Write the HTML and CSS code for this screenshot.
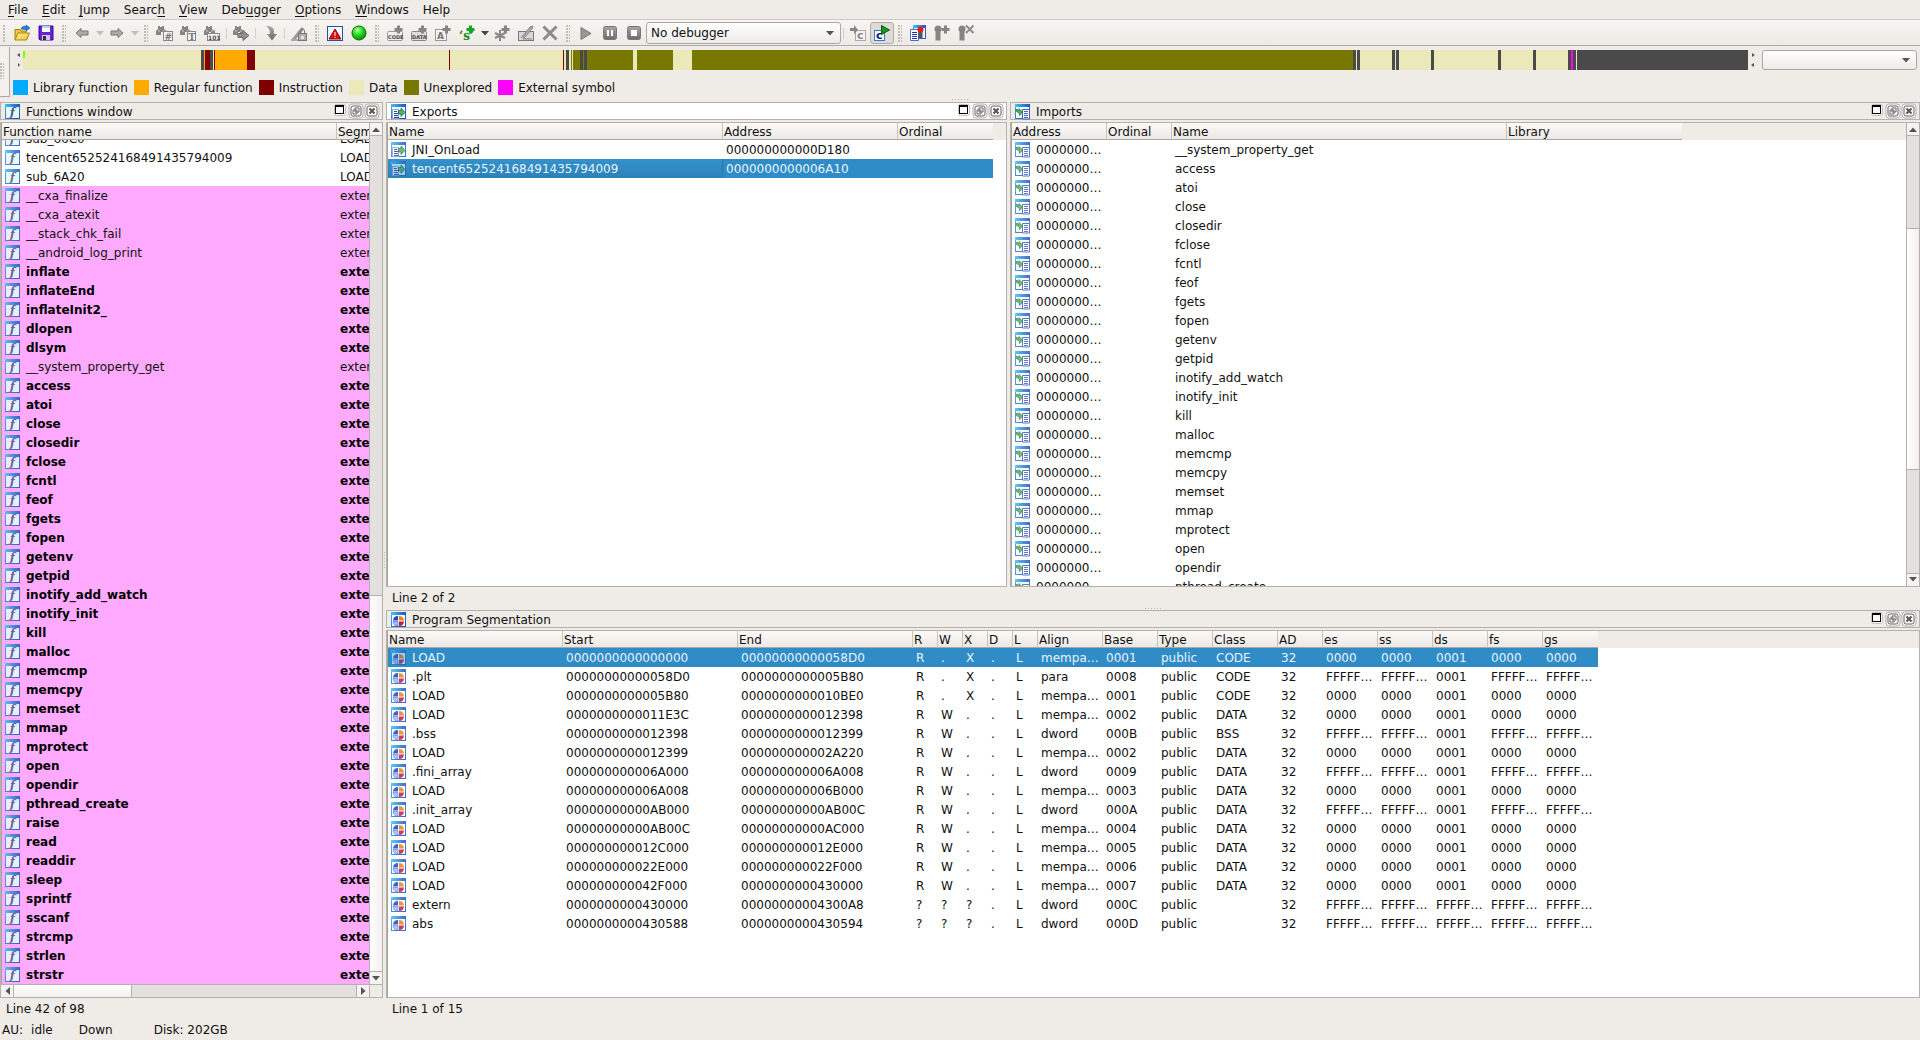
FILE: index.html
```html
<!DOCTYPE html>
<html lang="en">
<head>
<meta charset="utf-8">
<title>IDA</title>
<link rel="stylesheet" href="styles.css">
</head>
<body>
<svg class="sprite" aria-hidden="true">
  <defs>
    <linearGradient id="g-title" x1="0" x2="1"><stop offset="0" stop-color="#3fc4f5"/><stop offset="1" stop-color="#2150c0"/></linearGradient>
    <linearGradient id="g-frame" x1="0" y1="0" x2="1" y2="1"><stop offset="0" stop-color="#4fa0ec"/><stop offset="1" stop-color="#1d4fae"/></linearGradient>
    <linearGradient id="g-grey" x1="0" y1="0" x2="0" y2="1"><stop offset="0" stop-color="#a8a8a8"/><stop offset="1" stop-color="#6c6c6c"/></linearGradient>
    <radialGradient id="g-green" cx="0.4" cy="0.3" r="0.7"><stop offset="0" stop-color="#b6ffb0"/><stop offset="0.5" stop-color="#22dd1c"/><stop offset="1" stop-color="#0a8a0a"/></radialGradient>
    <linearGradient id="g-folder" x1="0" y1="0" x2="1" y2="1"><stop offset="0" stop-color="#fff6b0"/><stop offset="1" stop-color="#f2bd20"/></linearGradient>
  </defs>
  <symbol id="i-window" viewBox="0 0 16 16">
    <rect x="0.5" y="0.5" width="14" height="14" fill="#f6fdff" stroke="url(#g-frame)"/>
    <rect x="0" y="0" width="15" height="3" fill="url(#g-title)"/>
  </symbol>
  <symbol id="i-func" viewBox="0 0 16 16">
    <use href="#i-window"/>
    <rect x="1" y="3" width="13" height="11" fill="#e4f8fb"/>
    <text x="5" y="12" class="glyph-f">f</text>
  </symbol>
  <symbol id="i-export" viewBox="0 0 16 16">
    <use href="#i-window"/>
    <path d="M1.500 5.500h6v9h-6z" fill="#fff" stroke="#8fa4e4"/><path d="M3 7.500h3M3 9.500h4M3 11.500h4M3 13.500h5" stroke="#2a40b8"/>
    <path d="M7.500 6.500h2.500v-2.500l4 4.500l-4 4v-2.500h-2.500z" fill="#4cb85c" stroke="#1b5428" stroke-width="0.700"/>
  </symbol>
  <symbol id="i-import" viewBox="0 0 16 16">
    <use href="#i-window"/>
    <path d="M7.500 5.500h7v9.500h-7z" fill="#fff" stroke="#3a62b8"/><path d="M9 7.500h4M9 9.500h4M9 11.500h4M9 13.500h4" stroke="#4860c8"/>
    <path d="M1 5.500h1.500l1.500 1v-2l3.500 3.500l-3 3.500v-2l-3.500-2.500z" fill="#4cb85c" stroke="#1b5428" stroke-width="0.600"/>
  </symbol>
  <symbol id="i-seg" viewBox="0 0 16 16">
    <use href="#i-window"/>
    <path d="M7 4v4.500h-5a5 5 0 0 1 5-4.500z" fill="#1f45c8"/><path d="M8 4v4.500h5a5 5 0 0 0-5-4.500z" fill="#f08010"/>
    <path d="M2 9.500h5v4.500a5 5 0 0 1-5-4.500z" fill="#9cc0f8" stroke="#3868d8" stroke-width="0.600"/><path d="M8 9.500h5a5 5 0 0 1-5 4.500z" fill="#c4184c"/>
  </symbol>
  <symbol id="i-max" viewBox="0 0 12 12"><rect x="0.500" y="0.500" width="11" height="11" rx="2" fill="#fff" stroke="#c3c0bc"/><rect x="1.500" y="1.500" width="8" height="8" fill="#fff" stroke="#000"/><path d="M1 2h9" stroke="#000" stroke-width="2"/></symbol>
  <symbol id="i-float" viewBox="0 0 16 16"><rect x="1" y="1" width="14" height="14" rx="3" fill="#fbfaf9" stroke="#b4b1ae"/><rect x="3" y="3" width="10" height="10" rx="2" fill="none" stroke="#666"/><path d="M7 5h4v4h-4zM5 7h4v4h-4z" fill="#fff" stroke="#666"/></symbol>
  <symbol id="i-close" viewBox="0 0 16 16"><rect x="1" y="1" width="14" height="14" rx="3" fill="#fbfaf9" stroke="#b4b1ae"/><rect x="3" y="3" width="10" height="10" rx="2" fill="none" stroke="#666"/><path d="M5.500 5.500l5 5M10.500 5.500l-5 5" stroke="#555" stroke-width="2"/></symbol>
  <symbol id="i-up" viewBox="0 0 8 5"><path d="M0 5l4-4.500l4 4.500z" fill="#555"/></symbol>
  <symbol id="i-down" viewBox="0 0 8 5"><path d="M0 0h8l-4 4.500z" fill="currentColor"/></symbol>
  <symbol id="i-left" viewBox="0 0 5 8"><path d="M5 0v8l-4.500-4z" fill="#555"/></symbol>
  <symbol id="i-right" viewBox="0 0 5 8"><path d="M0 0v8l4.500-4z" fill="#555"/></symbol>
  <symbol id="i-bino" viewBox="0 0 16 16"><path d="M2 1h2v1h2v-1h2v3l3 2v4h-4v-3h-2v3h-5v-4l2-2z" fill="#858585"/><path d="M2 6h2M7 6h2" stroke="#c8c8c8"/></symbol>
  <symbol id="i-plus" viewBox="0 0 9 9"><path d="M3 0.500h3v2.500h2.500v3h-2.500v2.500h-3v-2.500h-2.500v-3h2.500z"/></symbol>
  <symbol id="i-pin" viewBox="0 0 8 16"><circle cx="4" cy="4" r="3.500"/><path d="M1.500 7h5v8.500h-5z"/></symbol>
</svg>

<nav class="menubar" aria-label="Main menu">
  <button><u>F</u>ile</button><button><u>E</u>dit</button><button><u>J</u>ump</button><button>Searc<u>h</u></button><button><u>V</u>iew</button><button>Deb<u>u</u>gger</button><button><u>O</u>ptions</button><button><u>W</u>indows</button><button>Help</button>
</nav>

<div class="toolbar" role="toolbar" aria-label="Tools">
  <span class="handle first"></span>
  <button class="tool" aria-label="Open"><svg viewBox="0 0 16 16"><path d="M1 14.500v-10h5l1 1.500h5v8.500z" fill="#f0c840" stroke="#a87a08"/><path d="M1 15l3-7h11.500l-3 7z" fill="url(#g-folder)" stroke="#b08510"/><path d="M7 4c1-2.500 3-3 5-2.500v-1.500l4 3l-4 3v-1.500c-2-.500-3 0-5-.500z" fill="#1c80e0" stroke="#0b3f94" stroke-width="0.500"/></svg></button>
  <button class="tool" aria-label="Save"><svg viewBox="0 0 16 16"><path d="M1 1h14v14h-13l-1-1z" fill="#6a22cc" stroke="#3a08a0"/><path d="M4 1h8v6h-8z" fill="#fff"/><path d="M4 2h8" stroke="#9ce0f8" stroke-width="2"/><path d="M4 10h8v5h-8z" fill="#cfc8ea"/><path d="M5 11h3v4h-3z" fill="#333"/></svg></button>
  <span class="handle"></span>
  <button class="tool" aria-label="Back"><svg viewBox="0 0 16 16"><path d="M2 8l5-4.500v2.500h7v4h-7v2.500z" fill="#aaa" stroke="#777"/></svg></button>
  <button class="drop faint" aria-label="Back history"><svg><use href="#i-down"/></svg></button>
  <button class="tool" aria-label="Forward"><svg viewBox="0 0 16 16"><path d="M14 8l-5-4.500v2.500h-7v4h7v2.500z" fill="#aaa" stroke="#777"/></svg></button>
  <button class="drop faint" aria-label="Forward history"><svg><use href="#i-down"/></svg></button>
  <span class="handle"></span>
  <button class="tool" aria-label="Search number"><svg viewBox="0 0 16 16"><use href="#i-bino" width="16" height="16"/><rect x="7.500" y="6.500" width="9" height="9" fill="#f4f4f4" stroke="#888"/><text x="8.500" y="14.500" class="glyph-9">#</text></svg></button>
  <button class="tool" aria-label="Search text"><svg viewBox="0 0 16 16"><use href="#i-bino" width="16" height="16"/><rect x="7.500" y="6.500" width="8" height="9" fill="#f4f4f4" stroke="#888"/><text x="8.500" y="14.500" class="glyph-9 serif">T</text></svg></button>
  <button class="tool" aria-label="Search bytes"><svg viewBox="0 0 16 16"><use href="#i-bino" width="16" height="16"/><rect x="3.500" y="8.500" width="12" height="7" fill="#f4f4f4" stroke="#888"/><text x="4" y="14.500" class="glyph-6">101</text></svg></button>
  <span class="sep"></span>
  <button class="tool" aria-label="Search next"><svg viewBox="0 0 16 16"><use href="#i-bino" width="16" height="16"/><path d="M5 8.500h5v-3l6 5l-6 5v-3h-5z" fill="#909090" stroke="#6d6d6d"/></svg></button>
  <span class="sep"></span>
  <button class="tool" aria-label="Jump down"><svg viewBox="0 0 16 16"><path d="M4 1c5 0 8 2 8 5v3h3l-5 6.500l-5-6.500h3c0-4-1-6-4-8z" fill="url(#g-grey)"/></svg></button>
  <span class="sep"></span>
  <button class="tool" aria-label="Lock highlight"><svg viewBox="0 0 16 16"><path d="M1 14l7-9l3-3l2 2l-2 3l-6 7z" fill="#999"/><path d="M0 15h8" stroke="#666"/><rect x="7.500" y="8.500" width="8" height="7" fill="#b0b0b0" stroke="#777"/><path d="M9.500 8v-2a2 2 0 0 1 4 0v2" fill="none" stroke="#777"/><path d="M11.500 11v3" stroke="#fff" stroke-width="2"/></svg></button>
  <span class="handle"></span>
  <button class="tool" aria-label="Problems"><svg viewBox="0 0 16 16"><rect x="0.500" y="1.500" width="15" height="14" fill="#f2fbff" stroke="#2050a8"/><path d="M1 2.500h14" stroke="url(#g-frame)" stroke-width="2"/><path d="M8 4l6 10h-12z" fill="#e01010" stroke="#980808"/><path d="M8 7v4M8 12v1" stroke="#fff"/></svg></button>
  <button class="tool" aria-label="Status"><svg viewBox="0 0 16 16"><circle cx="8" cy="8" r="7" fill="url(#g-green)" stroke="#087008"/></svg></button>
  <span class="handle"></span>
  <button class="tool grey" aria-label="Code"><svg viewBox="0 0 16 16"><rect x="0.500" y="6.500" width="15" height="9" rx="1" fill="#eee" stroke="#999"/><text x="1" y="13.500" class="glyph-5">CODE</text><use href="#i-plus" x="7" y="0" width="9" height="9"/></svg></button>
  <button class="tool grey" aria-label="Data"><svg viewBox="0 0 16 16"><rect x="0.500" y="6.500" width="15" height="9" rx="1" fill="#ddd" stroke="#888"/><text x="1" y="13.500" class="glyph-5">DATA</text><use href="#i-plus" x="7" y="0" width="9" height="9"/></svg></button>
  <button class="tool grey" aria-label="Name"><svg viewBox="0 0 16 16"><rect x="0.500" y="4.500" width="11" height="11" fill="#f4f4f4" stroke="#999"/><text x="2" y="14" class="glyph-9">A</text><use href="#i-plus" x="7" y="0" width="9" height="9"/></svg></button>
  <button class="tool green" aria-label="String"><svg viewBox="0 0 16 16"><text x="0" y="15" class="glyph-s">‘s’</text><use href="#i-plus" x="7" y="0" width="9" height="9"/></svg></button>
  <button class="drop" aria-label="String types"><svg><use href="#i-down"/></svg></button>
  <button class="tool grey" aria-label="Array"><svg viewBox="0 0 16 16"><path d="M6 5v11M1 8l10 5M1 13l10-5" stroke="#888" stroke-width="2"/><use href="#i-plus" x="7" y="0" width="9" height="9"/></svg></button>
  <button class="tool" aria-label="Edit item"><svg viewBox="0 0 16 16"><rect x="0.500" y="6.500" width="15" height="9" fill="#d8d8d8" stroke="#777"/><path d="M3 13l9-11l3-1l-1 3l-9 10h9" fill="#aaa" stroke="#888"/></svg></button>
  <button class="tool" aria-label="Undefine"><svg viewBox="0 0 16 16"><path d="M1.500 1.500l13 13M14.500 1.500l-13 13" stroke="#8b8b8b" stroke-width="3"/></svg></button>
  <span class="handle"></span>
  <button class="tool" aria-label="Start"><svg viewBox="0 0 16 16"><path d="M3 2.500v12l10-6z" fill="#999" stroke="#777"/></svg></button>
  <button class="tool" aria-label="Pause"><svg viewBox="0 0 16 16"><rect x="1.500" y="1.500" width="13" height="13" rx="2" fill="url(#g-grey)" stroke="#777"/><path d="M6 5v6M10 5v6" stroke="#fff" stroke-width="2"/></svg></button>
  <button class="tool" aria-label="Stop"><svg viewBox="0 0 16 16"><rect x="1.500" y="1.500" width="13" height="13" rx="2" fill="url(#g-grey)" stroke="#777"/><rect x="5" y="5" width="6" height="6" fill="#fff"/></svg></button>
  <span class="combo debugger"><select aria-label="Debugger"><option>No debugger</option></select><svg><use href="#i-down"/></svg></span>
  <span class="sep"></span>
  <button class="tool grey" aria-label="Attach"><svg viewBox="0 0 16 16"><rect x="5.500" y="5.500" width="10" height="10" fill="#f4f4f4" stroke="#aaa"/><text x="7" y="14" class="glyph-c">c</text><path d="M0 3h4v-3l4 5l-4 4v-3h-4z"/></svg></button>
  <button class="tool pressed" aria-label="Run C"><svg viewBox="0 0 16 16"><rect x="0.500" y="5.500" width="10" height="10" fill="#f4fcff" stroke="#3878c8"/><text x="2" y="14" class="glyph-c blue">c</text><path d="M7.500 0.500v9l8-4.500z" fill="#18981c" stroke="#0a5a10"/></svg></button>
  <span class="handle"></span>
  <button class="tool" aria-label="Breakpoints"><svg viewBox="0 0 16 16"><rect x="3.500" y="0.500" width="12" height="13" fill="#e8f6ff" stroke="#2860c8"/><path d="M3 0h13v3h-13z" fill="url(#g-title)"/><path d="M0.500 4.500h8v11h-8z" fill="#fff" stroke="#4870c8"/><path d="M2 7.500h5M2 9.500h5M2 11.500h5M2 13.500h5" stroke="#2036b0"/><path d="M8.500 7h4v6h-4z" fill="#555"/><circle cx="10.500" cy="4.500" r="3" fill="#e81818"/></svg></button>
  <button class="tool grey" aria-label="Add breakpoint"><svg viewBox="0 0 16 16"><use href="#i-pin" x="0" width="8" height="16"/><use href="#i-plus" x="7" y="0" width="9" height="9"/></svg></button>
  <button class="tool grey" aria-label="Delete breakpoint"><svg viewBox="0 0 16 16"><use href="#i-pin" x="0" width="8" height="16"/><path d="M8 0.500l7.500 7.500M15.500 0.500l-7.500 7.500" stroke="#8c8c8c" stroke-width="2"/></svg></button>
</div>

<section class="navigator" aria-label="Navigation band">
  <span class="grip"></span>
  <div class="nav-main">
    <div class="band-row">
      <span class="band-arrows"><svg viewBox="0 0 4 16"><path d="M3 1v4l-3-2zM1 11v4l2-2z" fill="#555"/></svg></span>
      <svg class="band" viewBox="0 0 1725 20" preserveAspectRatio="none" shape-rendering="crispEdges">
        <rect width="1725" height="20" fill="#ebe9ba"/>
        <path d="M0 1h2v7h-2z" fill="#80ff00"/>
        <path d="M548 0h1v20h-1zM550 0h60v20h-60zM614 0h36v20h-36zM669 0h661v20h-661z" fill="#787800"/>
        <path d="M181 0h1v20h-1zM192 0h32v20h-32z" fill="#ffaa00"/>
        <path d="M182 0h5v20h-5zM191 0h1v20h-1zM224 0h8v20h-8zM426 0h1v20h-1zM540 0h1v20h-1z" fill="#800000"/>
        <path d="M178 0h3v20h-3zM187 0h3v20h-3zM543 0h3v20h-3zM557 0h3v20h-3zM561 0h3v20h-3zM1330 0h3v20h-3zM1334 0h3v20h-3zM1369 0h3v20h-3zM1373 0h3v20h-3zM1408 0h3v20h-3zM1475 0h3v20h-3zM1510 0h3v20h-3zM1545 0h3v20h-3zM1550 0h3v20h-3zM1554 0h171v20h-171z" fill="#4a4a4a"/>
        <path d="M1548 0h2v20h-2z" fill="#ff00ff"/>
      </svg>
      <span class="band-arrows end"><svg viewBox="0 0 4 16"><path d="M1 1v4l3-2zM3 11v4l-3-2z" fill="#555"/></svg></span>
      <span class="combo jump"><select aria-label="Navigation scale"><option></option></select><svg><use href="#i-down"/></svg></span>
    </div>
    <ul class="legend">
      <li class="k-library">Library function</li>
      <li class="k-regular">Regular function</li>
      <li class="k-instruction">Instruction</li>
      <li class="k-data">Data</li>
      <li class="k-unexplored">Unexplored</li>
      <li class="k-external">External symbol</li>
    </ul>
  </div>
</section>
<div class="split-h wide"></div>

<main class="workspace">
  <div class="stack">
    <section class="dock">
      <header class="dock-title">
        <svg class="ico"><use href="#i-func"/></svg><h2>Functions window</h2>
        <button class="max" aria-label="Maximize"><svg><use href="#i-max"/></svg></button><button aria-label="Float"><svg><use href="#i-float"/></svg></button><button aria-label="Close"><svg><use href="#i-close"/></svg></button>
      </header>
      <div class="frame with-bars">
        <div class="view" id="functions-view"><table class="grid" id="functions"></table></div>
        <div class="bar-v">
          <span class="cap"><svg class="tri-v"><use href="#i-up"/></svg></span>
          <span class="track functions-before"></span><span class="thumb functions-thumb"></span>
          <span class="cap last"><svg class="tri-v"><use href="#i-down"/></svg></span>
        </div>
        <div class="bar-h">
          <span class="cap"><svg class="tri-h"><use href="#i-left"/></svg></span>
          <span class="thumb functions-hthumb"></span><span class="track functions-after"></span>
          <span class="cap last"><svg class="tri-h"><use href="#i-right"/></svg></span>
        </div>
        <span class="corner"></span>
      </div>
    </section>
    <p class="foot">Line 42 of 98</p>
  </div>

  <div class="split-v"></div>

  <div class="right">
    <div class="stack upper">
      <div class="pair">
        <section class="dock">
          <header class="dock-title active">
            <svg class="ico"><use href="#i-export"/></svg><h2>Exports</h2>
            <button class="max" aria-label="Maximize"><svg><use href="#i-max"/></svg></button><button aria-label="Float"><svg><use href="#i-float"/></svg></button><button aria-label="Close"><svg><use href="#i-close"/></svg></button>
          </header>
          <div class="frame"><div class="view"><table class="grid" id="exports"></table></div></div>
        </section>
        <section class="dock">
          <header class="dock-title">
            <svg class="ico"><use href="#i-import"/></svg><h2>Imports</h2>
            <button class="max" aria-label="Maximize"><svg><use href="#i-max"/></svg></button><button aria-label="Float"><svg><use href="#i-float"/></svg></button><button aria-label="Close"><svg><use href="#i-close"/></svg></button>
          </header>
          <div class="frame with-bars">
            <div class="view"><table class="grid" id="imports"></table></div>
            <div class="bar-v">
              <span class="cap"><svg class="tri-v"><use href="#i-up"/></svg></span>
              <span class="track imports-before"></span><span class="thumb imports-thumb"></span><span class="track imports-after"></span>
              <span class="cap last"><svg class="tri-v"><use href="#i-down"/></svg></span>
            </div>
          </div>
        </section>
      </div>
      <p class="foot">Line 2 of 2</p>
    </div>
    <div class="split-h"></div>
    <div class="stack lower">
      <section class="dock">
        <header class="dock-title">
          <svg class="ico"><use href="#i-seg"/></svg><h2>Program Segmentation</h2>
          <button class="max" aria-label="Maximize"><svg><use href="#i-max"/></svg></button><button aria-label="Float"><svg><use href="#i-float"/></svg></button><button aria-label="Close"><svg><use href="#i-close"/></svg></button>
        </header>
        <div class="frame"><div class="view"><table class="grid" id="segments"></table></div></div>
      </section>
      <p class="foot">Line 1 of 15</p>
    </div>
  </div>
</main>

<footer class="statusbar"><span>AU:</span><span class="s-idle">idle</span><span class="s-down">Down</span><span>Disk: 202GB</span></footer>
<script src="app.js"></script>
</body>
</html>
```
FILE: styles.css
```css
* { box-sizing: border-box; }

:root {
  --bg: #efebe7;
  --line: #b4b1ae;
  --select: #308cc6;
}

body {
  margin: 0;
  height: 100vh;
  display: flex;
  flex-direction: column;
  overflow: hidden;
  background: var(--bg);
  color: #111;
  font: 12px/14px "DejaVu Sans", sans-serif;
}

button, select { font: inherit; color: inherit; }
button { margin: 0; padding: 0; border: 0; background: none; }
svg { display: block; flex: none; }
h2, p, ul { margin: 0; padding: 0; font: inherit; }
.sprite { position: absolute; width: 0; height: 0; }

/* Menu bar */
.menubar { flex: none; display: flex; height: 20px; padding-left: 1px; border-bottom: 1px solid #cbc8c5; }
.menubar button { padding: 1px 7px 0; line-height: 18px; }
.menubar u { text-underline-offset: 2px; }

/* Toolbar */
.toolbar {
  flex: none;
  display: flex;
  align-items: center;
  height: 26px;
  padding-top: 1px;
  border-bottom: 1px solid #aeaba8;
  background: linear-gradient(#f8f5f2, #edeae6);
}
.tool { flex: none; width: 24px; height: 22px; display: grid; place-items: center; }
.tool svg { width: 16px; height: 16px; overflow: visible; }
.tool.pressed { border: 1px solid #b0aca8; border-radius: 3px; background: #dedbd7; }
.grey { fill: #858585; }
.green { fill: #10a818; }
.drop { flex: none; width: 11px; height: 22px; display: grid; place-items: center; color: #444; }
.drop svg { width: 8px; height: 5px; }
.faint { color: #c0bdba; }
.handle {
  flex: none;
  width: 12px;
  height: 17px;
  background: radial-gradient(circle at 1px 1px, #c2bfbb 1px, transparent 1px) 4px 0 / 3px 3px;
  background-clip: content-box;
  padding: 0 4px;
}
.handle.first { width: 10px; padding: 0 4px 0 2px; background-position: 0 0; }
.sep { flex: none; width: 5px; height: 11px; border-left: 1px solid #d3d0cc; margin-left: 2px; margin-right: -2px; }

.glyph-f { font: italic bold 11px "DejaVu Serif", serif; fill: #46587a; }
.glyph-9 { font: bold 9px "DejaVu Sans", sans-serif; fill: #777; }
.glyph-9.serif { font-family: "DejaVu Serif", serif; }
.glyph-6 { font: bold 6px "DejaVu Sans", sans-serif; fill: #555; }
.glyph-5 { font: bold 5px "DejaVu Sans", sans-serif; fill: #444; }
.glyph-s { font: bold 12px "DejaVu Serif", serif; fill: #1c8a20; }
.glyph-c { font: bold 11px "DejaVu Sans", sans-serif; fill: #888; }
.glyph-c.blue { fill: #101888; }

.combo { flex: none; display: grid; align-items: center; color: #555; }
.combo select, .combo svg { grid-area: 1 / 1; }
.combo select {
  appearance: none;
  width: 100%;
  height: 100%;
  padding: 0 4px;
  border: 1px solid #aaa7a4;
  border-radius: 3px;
  background: linear-gradient(#fff, #edebe9);
  color: #111;
}
.combo svg { width: 8px; height: 5px; margin-right: 7px; justify-self: end; pointer-events: none; }
.debugger { width: 195px; height: 22px; }
.jump { width: 155px; height: 20px; }

/* Navigation band */
.navigator { flex: none; display: flex; height: 51px; padding-top: 1px; }
.grip {
  width: 10px;
  border-right: 1px solid #aaa7a4;
  border-bottom: 1px solid #aaa7a4;
  background: radial-gradient(circle at 1px 1px, #c2bfbb 1px, transparent 1px) 0 0 / 3px 3px content-box, #f3f0ed;
  padding: 16px 5px 17px 0;
}
.nav-main { flex: 1; padding: 3px 3px 0; min-width: 0; }
.band-row { display: flex; height: 20px; align-items: center; }
.band-arrows { flex: none; width: 10px; padding-left: 4px; }
.band-arrows.end { width: 14px; padding-left: 3px; }
.band-arrows svg { width: 4px; height: 16px; }
.band { flex: 1; min-width: 0; height: 20px; }
.legend { display: flex; gap: 6px; margin-top: 10px; list-style: none; }
.legend li { display: flex; gap: 5px; line-height: 16px; }
.legend li::before { content: ""; width: 15px; height: 15px; background: var(--key); }
.k-library { --key: #00aaff; }
.k-regular { --key: #ffaa00; }
.k-instruction { --key: #800000; }
.k-data { --key: #ebe9ba; }
.k-unexplored { --key: #787800; }
.k-external { --key: #ff00ff; }

/* Splitters */
.split-h, .split-v { flex: none; display: grid; place-items: center; }
.split-h { height: 3px; }
.split-h.wide { height: 5px; }
.split-h::before, .split-v::before { content: ""; width: 17px; height: 1px; background: repeating-linear-gradient(90deg, #b8b5b2 0 1px, transparent 1px 3px); }
.split-v::before { width: 1px; height: 17px; background: repeating-linear-gradient(#b8b5b2 0 1px, transparent 1px 3px); }

/* Docks */
.workspace { flex: 1; min-height: 0; display: grid; grid-template-columns: 383px 3px minmax(0, 1fr); grid-template-rows: minmax(0, 1fr); }
.right, .stack, .dock { display: flex; flex-direction: column; min-height: 0; min-width: 0; }
.dock { flex: 1; gap: 2px; }
.upper { flex: 505 1 0; }
.lower { flex: 408 1 0; }
.pair { flex: 1; min-height: 0; display: grid; grid-template-columns: minmax(0, 621fr) minmax(0, 910fr); grid-template-rows: minmax(0, 1fr); gap: 3px; }
.foot { flex: none; height: 20px; padding: 2px 6px 0; line-height: 18px; }

.dock-title { flex: none; display: flex; align-items: center; height: 18px; padding: 0 2px 0 4px; border: 1px solid var(--line); }
.dock-title.active { background: #fff; }
.dock-title .ico { margin: 1px 5px 0 0; }
.dock-title h2 { flex: 1; padding-top: 2px; line-height: 14px; }
.dock-title button, .dock-title button svg { width: 16px; height: 16px; }
.dock-title .max, .dock-title .max svg { width: 12px; height: 12px; }
.dock-title .max { margin: 0 2px 3px 0; }
.ico { width: 16px; height: 16px; }

.frame { flex: 1; min-height: 0; display: grid; grid-template: minmax(0, 1fr) auto / minmax(0, 1fr) auto; border: 1px solid var(--line); }
.view { overflow: hidden; border-left: 1px solid #a5a29f; background: linear-gradient(var(--bg) 17px, #fff 17px); }

.grid { table-layout: fixed; border-collapse: separate; border-spacing: 0; width: 0; }
.grid th, .grid td { overflow: hidden; white-space: nowrap; text-align: left; }
.grid th {
  position: sticky;
  top: 0;
  z-index: 1;
  height: 17px;
  padding: 2px 1px 0;
  line-height: 14px;
  font-weight: normal;
  border-right: 1px solid #c6c3c0;
  border-bottom: 1px solid #aaa7a4;
  background: linear-gradient(#fdf9f7, #ebe8e5);
}
.grid th:last-child { border-right: 0; }
.grid td { height: 19px; padding: 1px 3px 0; line-height: 18px; }
.grid .named { display: flex; align-items: center; gap: 5px; }
.grid .named svg { opacity: 0.85; }
.external td { background: #ffaaff; }
.strong td { font-weight: bold; color: #000; }
.selected td { background: var(--select); color: #e8f3fb; }
.selected .named svg { opacity: 0.6; }
.focus td:first-child { background: linear-gradient(#3592cb, #2c82b9); box-shadow: inset -1px 0 #2876a8; }

/* Scroll bars */
.bar-v { display: flex; flex-direction: column; width: 12px; box-shadow: -1px 0 var(--line); }
.bar-h { display: flex; height: 13px; border-top: 1px solid var(--line); }
.corner { border-top: 1px solid var(--line); }
.with-bars .view { margin-right: 1px; }
.with-bars .bar-h { margin-right: 1px; box-shadow: 1px 0 var(--line); }
.cap { flex: none; display: grid; place-items: center; background: #f6f4f2; color: #555; }
.bar-v .cap { height: 13px; border-bottom: 1px solid var(--line); }
.bar-v .cap.last { border-bottom: 0; border-top: 1px solid var(--line); }
.bar-h .cap { width: 13px; border-right: 1px solid var(--line); }
.bar-h .cap.last { border-right: 0; border-left: 1px solid var(--line); }
.tri-v { width: 8px; height: 5px; }
.tri-h { width: 5px; height: 8px; }
.track { background: #e3e1de; }
.bar-v .thumb { background: linear-gradient(90deg, #fff, #f2f0ee); }
.bar-h .thumb { background: linear-gradient(#fff, #f2f0ee); border-right: 1px solid var(--line); }
.functions-before { flex: 460 1 0; }
.functions-thumb { flex: 375 1 0; border-top: 1px solid var(--line); }
.functions-hthumb { flex: 118 1 0; }
.functions-after { flex: 225 1 0; }
.imports-before { flex: 93 1 0; }
.imports-thumb { flex: 241 1 0; border: solid var(--line); border-width: 1px 0; }
.imports-after { flex: 104 1 0; }

/* Status bar */
.statusbar { flex: none; display: flex; height: 22px; padding: 2px 2px 0; line-height: 20px; }
.s-idle { margin-left: 8px; }
.s-down { margin: 0 41px 0 26px; }
```
FILE: app.js
```js
const icon = (id) => `<svg class="ico" aria-hidden="true"><use href="#${id}"/></svg>`;

function fill(id, iconId, columns, rows) {
  const table = document.getElementById(id);
  const cols = columns.map(([, width]) => `<col style="width:${width}px">`).join('');
  const heads = columns.map(([name]) => `<th scope="col">${name}</th>`).join('');
  const body = rows.map(({ cells, cls = '' }) => {
    const tds = cells.map((text, i) => i === 0
      ? `<td><span class="named">${icon(iconId)}${text}</span></td>`
      : `<td>${text}</td>`).join('');
    return `<tr class="${cls}">${tds}</tr>`;
  }).join('');
  table.style.width = `${columns.reduce((sum, [, w]) => sum + w, 0)}px`;
  table.innerHTML = `<colgroup>${cols}</colgroup><thead><tr>${heads}</tr></thead><tbody>${body}</tbody>`;
}

const local = ['sub_66C0', 'tencent652524168491435794009', 'sub_6A20'];
const plain = ['__cxa_finalize', '__cxa_atexit', '__stack_chk_fail', '__android_log_print', '__system_property_get'];
const external = ('__cxa_finalize __cxa_atexit __stack_chk_fail __android_log_print inflate inflateEnd inflateInit2_ ' +
  'dlopen dlsym __system_property_get access atoi close closedir fclose fcntl feof fgets fopen getenv getpid ' +
  'inotify_add_watch inotify_init kill malloc memcmp memcpy memset mmap mprotect open opendir pthread_create ' +
  'raise read readdir sleep sprintf sscanf strcmp strlen strstr').split(' ');

fill('functions', 'i-func', [['Function name', 335], ['Segment', 100]], [
  ...local.map((name) => ({ cells: [name, 'LOAD'] })),
  ...external.map((name) => ({
    cells: [name, 'extern'],
    cls: plain.includes(name) ? 'external' : 'external strong',
  })),
]);
document.getElementById('functions-view').scrollTop = 11;

fill('exports', 'i-export', [['Name', 335], ['Address', 175], ['Ordinal', 95]], [
  { cells: ['JNI_OnLoad', '000000000000D180', ''] },
  { cells: ['tencent652524168491435794009', '0000000000006A10', ''], cls: 'selected focus' },
]);

const firstImport = external.indexOf('__system_property_get');
fill('imports', 'i-import', [['Address', 95], ['Ordinal', 65], ['Name', 335], ['Library', 175]],
  external.slice(firstImport, firstImport + 24).map((name) => ({ cells: ['0000000…', '', name, ''] })));

const segments = `LOAD 0000000000000000 00000000000058D0 R . X . L mempa… 0001 public CODE 32 0
.plt 00000000000058D0 0000000000005B80 R . X . L para 0008 public CODE 32 F
LOAD 0000000000005B80 0000000000010BE0 R . X . L mempa… 0001 public CODE 32 0
LOAD 0000000000011E3C 0000000000012398 R W . . L mempa… 0002 public DATA 32 0
.bss 0000000000012398 0000000000012399 R W . . L dword 000B public BSS 32 F
LOAD 0000000000012399 000000000002A220 R W . . L mempa… 0002 public DATA 32 0
.fini_array 000000000006A000 000000000006A008 R W . . L dword 0009 public DATA 32 F
LOAD 000000000006A008 000000000006B000 R W . . L mempa… 0003 public DATA 32 0
.init_array 00000000000AB000 00000000000AB00C R W . . L dword 000A public DATA 32 F
LOAD 00000000000AB00C 00000000000AC000 R W . . L mempa… 0004 public DATA 32 0
LOAD 000000000012C000 000000000012E000 R W . . L mempa… 0005 public DATA 32 0
LOAD 000000000022E000 000000000022F000 R W . . L mempa… 0006 public DATA 32 0
LOAD 000000000042F000 0000000000430000 R W . . L mempa… 0007 public DATA 32 0
extern 0000000000430000 00000000004300A8 ? ? ? . L dword 000C public - 32 X
abs 0000000000430588 0000000000430594 ? ? ? . L dword 000D public - 32 X`;

const selectors = {
  0: ['0000', '0000', '0001', '0000', '0000'],
  F: ['FFFFF…', 'FFFFF…', '0001', 'FFFFF…', 'FFFFF…'],
  X: ['FFFFF…', 'FFFFF…', 'FFFFF…', 'FFFFF…', 'FFFFF…'],
};

fill('segments', 'i-seg', [
  ['Name', 175], ['Start', 175], ['End', 175], ['R', 25], ['W', 25], ['X', 25], ['D', 25], ['L', 25],
  ['Align', 65], ['Base', 55], ['Type', 55], ['Class', 65], ['AD', 45],
  ['es', 55], ['ss', 55], ['ds', 55], ['fs', 55], ['gs', 55],
], segments.split('\n').map((line, i) => {
  const parts = line.split(' ');
  const kind = parts.pop();
  return {
    cells: [...parts.map((part) => (part === '-' ? '' : part)), ...selectors[kind]],
    cls: i === 0 ? 'selected' : '',
  };
}));
```
